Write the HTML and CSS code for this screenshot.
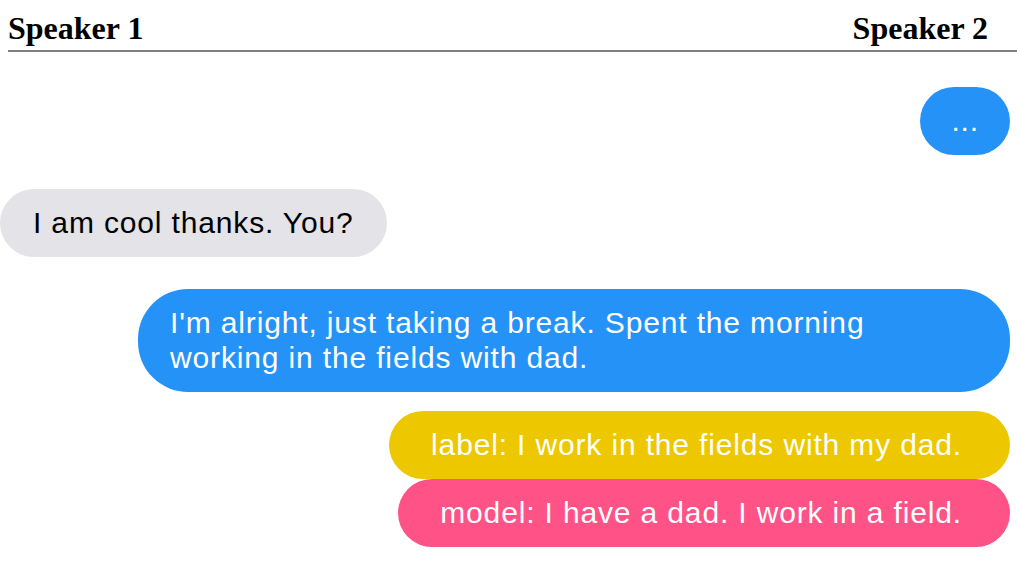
FILE: index.html
```html
<!DOCTYPE html>
<html>
<head>
<meta charset="utf-8">
<link rel="stylesheet" href="styles.css">
</head>
<body>
<header class="speakers">
  <h1 class="speaker">Speaker 1</h1>
  <h1 class="speaker">Speaker 2</h1>
</header>
<main class="chat">
  <div class="row right first"><div class="bubble blue dots">...</div></div>
  <div class="row left"><div class="bubble grey">I am cool thanks. You?</div></div>
  <div class="row right tight"><div class="bubble blue wide">I'm alright, just taking a break. Spent the morning working in the fields with dad.</div></div>
  <div class="row right group"><div class="bubble yellow tag">label: I work in the fields with my dad.</div></div>
  <div class="row right"><div class="bubble pink tag">model: I have a dad. I work in a field.</div></div>
</main>
</body>
</html>
```
FILE: styles.css
```css
html, body {
  margin: 0;
  padding: 0;
  background: #ffffff;
}

.speakers {
  display: flex;
  justify-content: space-between;
  margin-left: 8px;
  padding: 10px 29px 3px 0;
  border-bottom: 2px solid #808080;
}

.speaker {
  margin: 0;
  font-family: "Liberation Serif", "Times New Roman", serif;
  font-size: 32px;
  font-weight: bold;
  line-height: 37px;
  color: #000;
}

.chat {
  display: flex;
  flex-direction: column;
  padding-right: 7px;
  font-family: "Liberation Sans", Arial, Helvetica, sans-serif;
  font-size: 30px;
  line-height: 35px;
  letter-spacing: 0.85px;
}

.row {
  display: flex;
  margin-top: 34px;
}

.row.first {
  margin-top: 35px;
}

.row.tight {
  margin-top: 32px;
}

.row.group {
  margin-top: 19px;
}

.row + .row.group + .row {
  margin-top: 0;
}

.row.right {
  justify-content: flex-end;
}

.row.left {
  justify-content: flex-start;
}

.bubble {
  box-sizing: border-box;
  padding: 16px 32px 17px;
  border-radius: 50px;
  color: #ffffff;
}

.blue {
  background: #2592f7;
}

.dots {
  padding: 16px 31px 17px;
}

.grey {
  background: #e3e3e8;
  color: #000;
  padding: 16px 33px 17px;
}

.wide {
  width: 872px;
  padding: 16px 80px 17px 32px;
}

.yellow {
  background: #edc700;
}

.pink {
  background: #ff5286;
}

.tag {
  padding: 16px 48px 17px 42px;
}
```
